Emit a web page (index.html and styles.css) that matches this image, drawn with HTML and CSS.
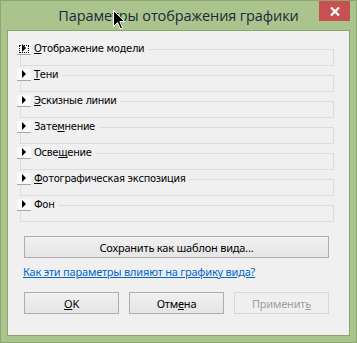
FILE: index.html
```html
<!DOCTYPE html>
<html lang="ru">
<head>
<meta charset="utf-8">
<link rel="stylesheet" href="styles.css">
</head>
<body>
<div class="window">
  <div class="titlebar">
    <div class="title">Параметры отображения графики</div>
    <div class="close"><svg width="10" height="9" viewBox="0 0 10 9"><path d="M1 0.5 L9 8.5 M9 0.5 L1 8.5" stroke="#fff" stroke-width="2.2"/></svg></div>
  </div>
  <div class="client">
    <div class="groups">
      <div class="group">
        <div class="head"><span class="exp focus"><svg width="6" height="8" viewBox="0 0 6 8"><path d="M1 0 L5 4 L1 8 Z" fill="#000"/></svg></span><span class="label"><u>О</u>тображение модели</span><span class="rule"></span></div>
        <div class="box"></div>
      </div>
      <div class="group">
        <div class="head"><span class="exp"><svg width="6" height="8" viewBox="0 0 6 8"><path d="M1 0 L5 4 L1 8 Z" fill="#000"/></svg></span><span class="label"><u>Т</u>ени</span><span class="rule"></span></div>
        <div class="box"></div>
      </div>
      <div class="group">
        <div class="head"><span class="exp"><svg width="6" height="8" viewBox="0 0 6 8"><path d="M1 0 L5 4 L1 8 Z" fill="#000"/></svg></span><span class="label"><u>Э</u>скизные линии</span><span class="rule"></span></div>
        <div class="box"></div>
      </div>
      <div class="group">
        <div class="head"><span class="exp"><svg width="6" height="8" viewBox="0 0 6 8"><path d="M1 0 L5 4 L1 8 Z" fill="#000"/></svg></span><span class="label">Зате<u>м</u>нение</span><span class="rule"></span></div>
        <div class="box"></div>
      </div>
      <div class="group">
        <div class="head"><span class="exp"><svg width="6" height="8" viewBox="0 0 6 8"><path d="M1 0 L5 4 L1 8 Z" fill="#000"/></svg></span><span class="label">Осве<u>щ</u>ение</span><span class="rule"></span></div>
        <div class="box"></div>
      </div>
      <div class="group">
        <div class="head"><span class="exp"><svg width="6" height="8" viewBox="0 0 6 8"><path d="M1 0 L5 4 L1 8 Z" fill="#000"/></svg></span><span class="label"><u>Ф</u>отографическая экспозиция</span><span class="rule"></span></div>
        <div class="box"></div>
      </div>
      <div class="group">
        <div class="head"><span class="exp"><svg width="6" height="8" viewBox="0 0 6 8"><path d="M1 0 L5 4 L1 8 Z" fill="#000"/></svg></span><span class="label">Фон</span><span class="rule"></span></div>
        <div class="box"></div>
      </div>
    </div>
    <div class="btn save">Сохранить как шаблон вида...</div>
    <a class="link" href="#">Как эти параметры влияют на графику вида?</a>
    <div class="actions">
      <div class="btn"><u>O</u>K</div>
      <div class="btn">Отм<u>е</u>на</div>
      <div class="btn disabled">Применит<u>ь</u></div>
    </div>
  </div>
  <svg class="cursor" width="13" height="20" viewBox="0 0 13 20"><path d="M0.5 0.5 L0.5 16.5 L4.5 12.5 L7.5 19 L9.5 18 L6.8 11.6 L11.8 11.6 Z" fill="#000" stroke="#fff" stroke-width="1"/></svg>
</div>
</body>
</html>
```

FILE: styles.css
```css
* { box-sizing: border-box; }
html, body { margin: 0; padding: 0; }
body { width: 357px; height: 343px; overflow: hidden; }

.window {
  position: relative;
  width: 357px;
  height: 343px;
  background: #abc48e;
  border: 1px solid #8da672;
  display: flex;
  flex-direction: column;
}

.titlebar {
  height: 29px;
  display: flex;
  align-items: flex-start;
  justify-content: center;
  position: relative;
}
.title {
  font-family: "Open Sans", "Noto Sans", sans-serif;
  font-size: 14.5px;
  color: #1b2a38;
  line-height: 20px;
  margin-top: 5px;
  letter-spacing: -0.1px;
}
.close {
  position: absolute;
  right: 6px;
  top: 0;
  width: 31px;
  height: 20px;
  background: #c75050;
  display: flex;
  align-items: center;
  justify-content: center;
}

.client {
  flex: 1;
  margin: 0 6px 6px 6px;
  background: #f0f0f0;
  border: 1px solid #8aa46f;
  padding: 11px 0 0 0;
  display: flex;
  flex-direction: column;
}

.groups { display: flex; flex-direction: column; gap: 2px; }
.group { margin: 0 15px 0 9px; }
.head {
  display: flex;
  align-items: center;
  height: 13px;
  position: relative;
}
.exp {
  width: 14px;
  height: 12px;
  background: #f9f9f9;
  border-bottom: 1px solid #a8a8a8;
  display: flex;
  align-items: center;
  justify-content: center;
  flex: none;
}
.exp.focus { outline: 1px dotted #000; outline-offset: -3px; }
.label {
  font-family: "DejaVu Sans", sans-serif;
  font-size: 10px;
  letter-spacing: -0.3px;
  color: #000;
  margin-left: 3px;
  white-space: nowrap;
  line-height: 13px;
}
.rule {
  flex: 1;
  border-top: 1px solid #dcdcdc;
  margin-left: 4px;
  margin-top: 1px;
}
.box {
  margin-left: 3px;
  margin-top: -6px;
  height: 17px;
  border: 1px solid #dcdcdc;
  border-top: none;
}

.btn {
  height: 22px;
  border: 1px solid #adadad;
  background: linear-gradient(#f0f0f0, #e5e5e5);
  font-family: "Noto Sans", sans-serif;
  font-size: 11px;
  letter-spacing: -0.2px;
  color: #000;
  display: flex;
  align-items: center;
  justify-content: center;
}
.save { margin: 14px 20px 0 16px; }
.link {
  margin: 6px 0 0 15px;
  font-family: "Noto Sans", sans-serif;
  font-size: 11px;
  letter-spacing: -0.2px;
  color: #0066cc;
  text-decoration: underline;
  line-height: 16px;
  align-self: flex-start;
}
.actions {
  display: flex;
  gap: 10px;
  margin: 12px 20px 0 16px;
}
.actions .btn { width: 95px; }
.btn.disabled {
  color: #a0a0a0;
  border-color: #d9d9d9;
  background: #efefef;
}

.cursor {
  position: absolute;
  left: 112px;
  top: 9px;
}
```
